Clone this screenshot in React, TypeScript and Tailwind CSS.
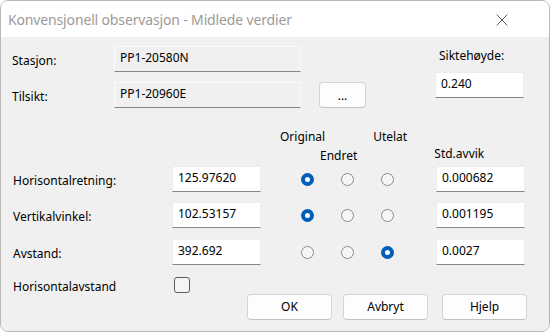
import React from "react"

const font = { fontFamily: '"Noto Sans", "Open Sans", sans-serif' }

function Radio({ checked }: { checked?: boolean }) {
    return (
        <div className="w-[40px] flex justify-center">
            {checked ? (
                <div className="w-[13px] h-[13px] rounded-full bg-[#005fb8] flex items-center justify-center">
                    <div className="w-[5px] h-[5px] rounded-full bg-white" />
                </div>
            ) : (
                <div className="w-[13px] h-[13px] rounded-full border border-[#8a8a8a] bg-[#f6f6f6]" />
            )}
        </div>
    )
}

function Field({ value, readOnly, w }: { value: string; readOnly?: boolean; w: string }) {
    return (
        <div className={`${w} h-[26px] pl-[5px] pt-[2px] text-[12px] leading-[18px] border border-b-[#868686] ${
            readOnly ? 'bg-[#f0f0f0] border-[#fafafa]' : 'bg-white border-[#ececec]'
        }`}>
            {value}
        </div>
    )
}

function Btn({ label, className }: { label: string; className?: string }) {
    return (
        <div className={`w-[85px] h-[26px] rounded-[4px] bg-[#fdfdfd] border border-[#d5d5d5] border-b-[#c2c2c2] flex items-center justify-center text-[12px] ${className ?? ''}`}>
            {label}
        </div>
    )
}

const rows = [
    { label: 'Horisontalretning:', value: '125.97620', sel: 0, std: '0.000682', mt: 'mt-0' },
    { label: 'Vertikalvinkel:', value: '102.53157', sel: 0, std: '0.001195', mt: 'mt-[10px]' },
    { label: 'Avstand:', value: '392.692', sel: 2, std: '0.0027', mt: 'mt-[11px]' },
]

export default function App() {
    return (
        <div className="w-[550px] h-[332px] bg-white text-black" style={font}>
            <div className="w-full h-full rounded-[8px] overflow-hidden border border-[#b8b8b8] flex flex-col">
                <div className="h-[36px] bg-white flex items-center justify-between pl-[7px] pr-[41px] shrink-0">
                    <span className="text-[14px] text-[#9d9a97] tracking-[-0.15px]">Konvensjonell observasjon - Midlede verdier</span>
                    <svg width="12" height="12" viewBox="0 0 12 12" className="mt-[1px]">
                        <path d="M0.5 0.5 L11.5 11.5 M11.5 0.5 L0.5 11.5" stroke="#5f5f5f" strokeWidth="1" />
                    </svg>
                </div>
                <div className="flex-1 bg-[#f0f0f0] text-[12px]">
                    <div className="flex">
                        <div className="pl-[11px]">
                            <div className="flex items-center mt-[9px]">
                                <span className="w-[102px] pt-[4px]">Stasjon:</span>
                                <Field w="w-[187px]" value="PP1-20580N" readOnly />
                            </div>
                            <div className="flex items-center mt-[10px]">
                                <span className="w-[102px] pt-[4px]">Tilsikt:</span>
                                <Field w="w-[187px]" value="PP1-20960E" readOnly />
                                <div className="ml-[18px] w-[47px] h-[26px] rounded-[4px] bg-[#fdfdfd] border border-[#d5d5d5] border-b-[#c2c2c2] flex items-center justify-center leading-none pt-[2px]">...</div>
                            </div>
                        </div>
                        <div className="ml-[69px] mt-[10px]">
                            <div className="pl-[4px] h-[20px]">Siktehøyde:</div>
                            <div className="mt-[5px]">
                                <Field w="w-[89px]" value="0.240" />
                            </div>
                        </div>
                    </div>

                    <div className="mt-[20px] h-[20px] flex">
                        <span className="ml-[279px]">Original</span>
                        <span className="ml-[48px]">Utelat</span>
                    </div>
                    <div className="h-[18px] flex">
                        <span className="ml-[319px] mt-[-1px]">Endret</span>
                        <span className="ml-[77px] mt-[-3px]">Std.avvik</span>
                    </div>

                    {rows.map(r => (
                        <div key={r.label} className={`flex items-center ${r.mt}`}>
                            <span className="w-[171px] pl-[12px] pt-[4px]">{r.label}</span>
                            <Field w="w-[89px]" value={r.value} />
                            <div className="flex ml-[26px]">
                                <Radio checked={r.sel === 0} />
                                <Radio checked={r.sel === 1} />
                                <Radio checked={r.sel === 2} />
                            </div>
                            <div className="ml-[29px]">
                                <Field w="w-[89px]" value={r.std} />
                            </div>
                        </div>
                    ))}

                    <div className="flex items-center h-[16px] mt-[12px]">
                        <span className="w-[173px] pl-[12px] pt-[4px]">Horisontalavstand</span>
                        <div className="w-[16px] h-[16px] rounded-[3px] border border-[#5e5e5e] bg-[#f5f5f5]" />
                    </div>
                    <div className="flex mt-[1px]">
                        <Btn label="OK" className="ml-[246px]" />
                        <Btn label="Avbryt" className="ml-[11px]" />
                        <Btn label="Hjelp" className="ml-[14px]" />
                    </div>
                </div>
            </div>
        </div>
    )
}
